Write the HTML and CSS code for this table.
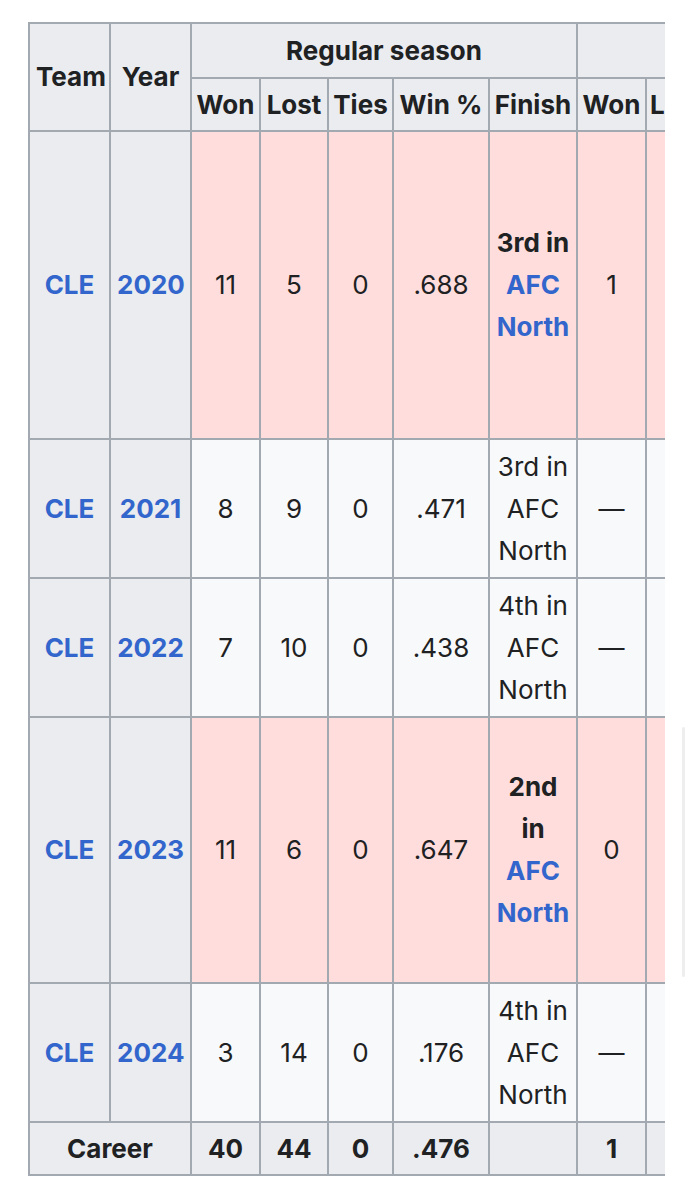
FILE: index.html
```html
<!DOCTYPE html>
<html lang="en">
<head>
<meta charset="utf-8">
<link rel="stylesheet" href="styles.css">
</head>
<body>
<div class="page">
  <div class="scroller">
    <table class="stats">
      <colgroup>
        <col class="c-team"><col class="c-year"><col class="c-won"><col class="c-lost"><col class="c-ties"><col class="c-pct"><col class="c-finish"><col class="c-pwon"><col class="c-plost"><col class="c-rest">
      </colgroup>
      <thead>
        <tr class="h1">
          <th rowspan="2">Team</th>
          <th rowspan="2">Year</th>
          <th colspan="5">Regular season</th>
          <th colspan="3"></th>
        </tr>
        <tr class="h2">
          <th>Won</th><th>Lost</th><th>Ties</th><th>Win %</th><th>Finish</th><th>Won</th><th class="plost">Lost</th><th></th>
        </tr>
      </thead>
      <tbody>
        <tr class="r2020 playoff">
          <th><a>CLE</a></th><th><a>2020</a></th>
          <td>11</td><td>5</td><td>0</td><td>.688</td>
          <td class="fin"><b>3rd in <a>AFC North</a></b></td>
          <td>1</td><td></td><td></td>
        </tr>
        <tr class="r3">
          <th><a>CLE</a></th><th><a>2021</a></th>
          <td>8</td><td>9</td><td>0</td><td>.471</td>
          <td class="fin">3rd in AFC North</td>
          <td>—</td><td></td><td></td>
        </tr>
        <tr class="r3">
          <th><a>CLE</a></th><th><a>2022</a></th>
          <td>7</td><td>10</td><td>0</td><td>.438</td>
          <td class="fin">4th in AFC North</td>
          <td>—</td><td></td><td></td>
        </tr>
        <tr class="r2023 playoff">
          <th><a>CLE</a></th><th><a>2023</a></th>
          <td>11</td><td>6</td><td>0</td><td>.647</td>
          <td class="fin"><b>2nd in <a>AFC North</a></b></td>
          <td>0</td><td></td><td></td>
        </tr>
        <tr class="r3">
          <th><a>CLE</a></th><th><a>2024</a></th>
          <td>3</td><td>14</td><td>0</td><td>.176</td>
          <td class="fin">4th in AFC North</td>
          <td>—</td><td></td><td></td>
        </tr>
        <tr class="career">
          <th colspan="2">Career</th>
          <th>40</th><th>44</th><th>0</th><th>.476</th><th></th><th>1</th><th></th><th></th>
        </tr>
      </tbody>
    </table>
  </div>
  <div class="scroll-indicator"></div>
</div>
</body>
</html>
```

FILE: styles.css
```css
html, body {
  margin: 0;
  padding: 0;
  background: #ffffff;
}

.page {
  position: relative;
  width: 693px;
  height: 1200px;
  padding: 22px 0 0 28px;
  box-sizing: border-box;
}

.scroller {
  width: 637px;
  overflow: hidden;
}

.stats {
  border-collapse: collapse;
  table-layout: fixed;
  width: 820px;
  font-family: Inter, "Liberation Sans", sans-serif;
  font-size: 26px;
  line-height: 42px;
  color: #202122;
  text-align: center;
}

.c-team { width: 81px; }
.c-year { width: 81px; }
.c-won { width: 69px; }
.c-lost { width: 68px; }
.c-ties { width: 65px; }
.c-pct { width: 96px; }
.c-finish { width: 88px; }
.c-pwon { width: 69px; }
.c-plost { width: 68px; }
.c-rest { width: 135px; }

.stats th,
.stats td {
  border: 2px solid #a2a9b1;
  padding: 4px 6px;
  vertical-align: middle;
  overflow: hidden;
}

.stats th {
  background: #eaecf0;
  font-weight: 700;
}

.stats td {
  background: #f8f9fa;
  font-weight: 400;
}

.stats tr.playoff td {
  background: #ffdddd;
}

.stats a {
  color: #3366cc;
  text-decoration: none;
  font-weight: 700;
}

.stats b {
  font-weight: 700;
}

.h1 { height: 55px; }
.h2 { height: 53px; }
.r2020 { height: 308px; }
.r3 { height: 139px; }
.r2023 { height: 266px; }
.career { height: 53px; }

.h2 th {
  padding-left: 3px;
  padding-right: 3px;
}

.stats .h2 th.plost {
  text-align: left;
  padding-left: 3px;
}

.scroll-indicator {
  position: absolute;
  left: 682px;
  top: 727px;
  width: 3px;
  height: 250px;
  border-radius: 2px;
  background: #eeeeee;
}
```
